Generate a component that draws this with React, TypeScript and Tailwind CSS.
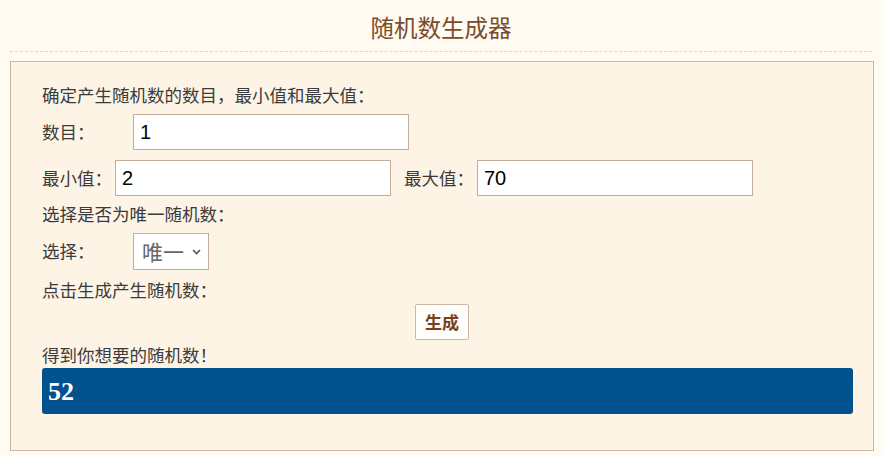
import React, { useState } from 'react';

const cjk = { fontFamily: '"Noto Sans CJK SC", sans-serif' };
const latin = { fontFamily: '"Liberation Sans", Arial, sans-serif' };

const App: React.FC = () => {
  const [count, setCount] = useState('1');
  const [min, setMin] = useState('2');
  const [max, setMax] = useState('70');
  const [result] = useState('52');

  const inputCls =
    'w-[276px] h-[36px] border border-[#c4ae9b] bg-white px-[6px] text-[20px] text-black outline-none';

  return (
    <div className="min-h-screen bg-[#fffaf2] px-[10px] pt-[11px]" style={cjk}>
      {/* Title */}
      <div className="border-b border-dashed border-[#e2d6c2] pb-[8px] mr-[2px]">
        <h1 className="text-center text-[23.5px] leading-[32px] text-[#7b4c2b]">随机数生成器</h1>
      </div>

      {/* Form box */}
      <div className="mt-[9px] h-[390px] border border-[#cbb7a3] bg-[#fdf4e6] pl-[31px] pr-[21px] pt-[21px] text-[17.5px] text-[#3b3b3b]">
        <p className="leading-[24px]">确定产生随机数的数目，最小值和最大值：</p>

        <div className="mt-[7px] flex items-center">
          <span className="w-[91px]">数目：</span>
          <input className={inputCls} style={latin} value={count} onChange={e => setCount(e.target.value)} />
        </div>

        <div className="mt-[10px] flex items-center">
          <span className="w-[73px]">最小值：</span>
          <input className={inputCls} style={latin} value={min} onChange={e => setMin(e.target.value)} />
          <span className="ml-[13px] w-[73px]">最大值：</span>
          <input className={inputCls} style={latin} value={max} onChange={e => setMax(e.target.value)} />
        </div>

        <p className="mt-[6px] leading-[24px]">选择是否为唯一随机数：</p>

        <div className="mt-[7px] flex items-center">
          <span className="w-[91px]">选择：</span>
          <div className="flex h-[37px] w-[76px] items-center justify-between border border-[#c4ae9b] bg-white pl-[8px] pr-[7px]">
            <span className="text-[21px] text-[#666]">唯一</span>
            <svg width="9" height="6" viewBox="0 0 9 6" fill="none">
              <path d="M1 1l3.5 3.5L8 1" stroke="#555" strokeWidth="1.6" />
            </svg>
          </div>
        </div>

        <p className="mt-[8px] leading-[24px]">点击生成产生随机数：</p>

        <div className="mt-[2px] flex justify-center pr-[10px]">
          <button className="h-[36px] w-[54px] rounded-[2px] border border-[#cbb7a3] bg-[#fffdf9] text-[17px] font-bold text-[#7a3f1c]">
            生成
          </button>
        </div>

        <p className="mt-[3px] leading-[24px]">得到你想要的随机数！</p>

        <div className="mt-[1px] flex h-[46px] w-[811px] items-center rounded-[3px] bg-[#02528f] pl-[6px] text-[26px] font-bold text-white" style={{ fontFamily: '"Liberation Serif", "Times New Roman", serif' }}>
          {result}
        </div>
      </div>
    </div>
  );
};

export default App;
